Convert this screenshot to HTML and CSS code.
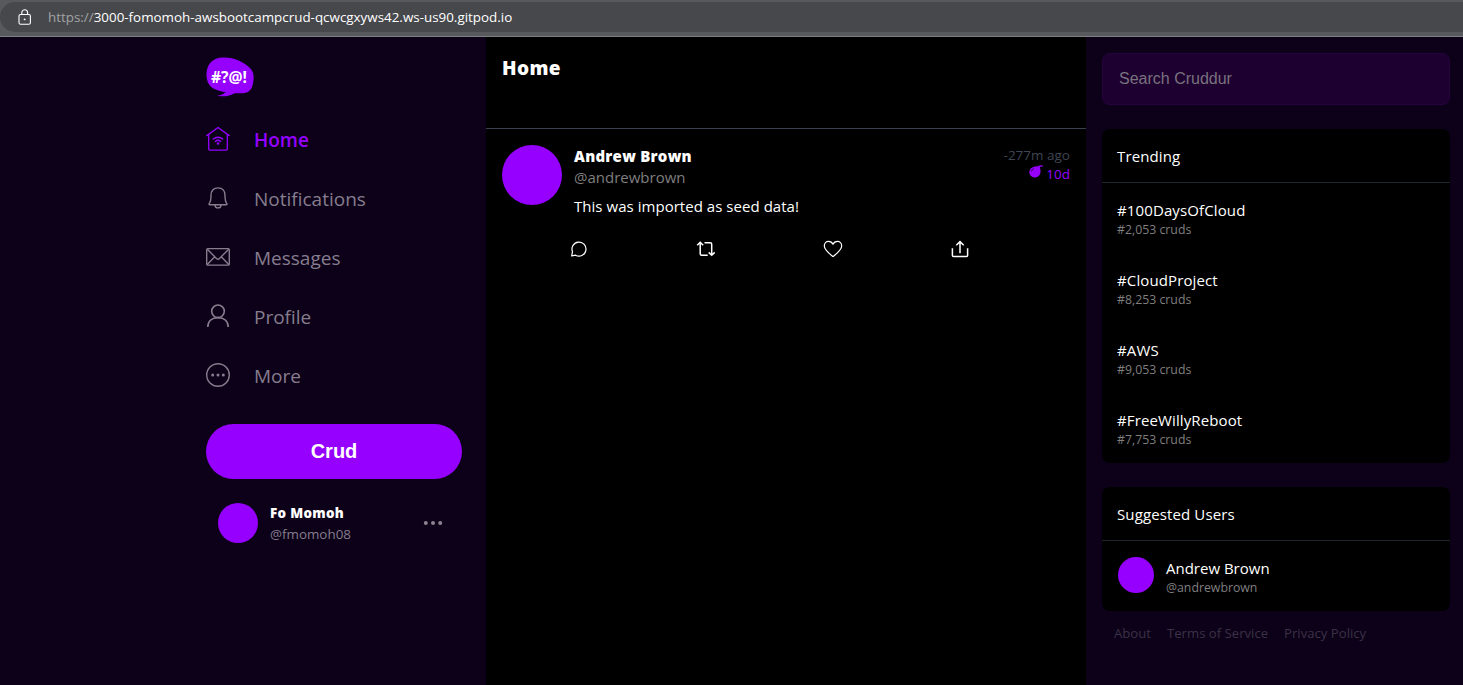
FILE: index.html
```html
<!DOCTYPE html>
<html lang="en">
<head>
<meta charset="utf-8">
<title>Cruddur</title>
<link rel="stylesheet" href="styles.css">
</head>
<body>
<header class="browser-bar">
  <div class="address">
    <svg class="lock" width="14" height="17" viewBox="0 0 14 17" fill="none" stroke="#fff" stroke-width="1.1"><rect x="1" y="5.5" width="11.4" height="9.8" rx="1.6"/><path d="M3.8 5.5V3.8a2.900 3 0 0 1 5.800 0v1.700"/><circle cx="6.700" cy="10.400" r=".6" fill="#fff" stroke-width=".7"/></svg>
    <span class="url"><span class="scheme">https://</span>3000-fomomoh-awsbootcampcrud-qcwcgxyws42.ws-us90.gitpod.io</span>
  </div>
</header>
<div class="app">
  <aside class="left">
    <nav class="nav">
      <svg class="logo" width="48" height="40" viewBox="0 0 48 40"><path fill="#9500ff" d="M17.500 0.400C27 0 38 4.500 44.500 11.500c3.800 4.500 3.500 9.500 2.500 14.500-.8 6-3.500 9.500-9.500 10.200-4 .4-8-.2-9.500.3-4 2.300-10 3.800-17 2.200 4-.6 7-1.800 8.800-3.800C12 34.500 5 31.500 2.200 26-1 19 .2 10 5 5 8.500 1.500 12.500.6 17.500.4z"/><text class="logo-text" x="5" y="25.500" textLength="36" lengthAdjust="spacingAndGlyphs">#?@!</text></svg>
      <a class="nav-item active"><svg width="24" height="26" viewBox="0 0 24 26" fill="none" stroke="currentColor" stroke-width="1.300" stroke-linejoin="round" stroke-linecap="round"><path d="M.8 9.600 12 1.500l11.200 8.100M2.700 8.500v14.300c0 .8.5 1.300 1.300 1.300h16c.8 0 1.300-.5 1.300-1.300V8.500M7.300 13.100c2.700-2.500 6.700-2.500 9.400 0M9.300 15.500c1.500-1.400 3.900-1.400 5.400 0"/><circle cx="12" cy="17.500" r=".7" fill="currentColor"/></svg><span>Home</span></a>
      <a class="nav-item"><svg width="24" height="26" viewBox="0 0 24 26" fill="none" stroke="currentColor" stroke-width="1.400" stroke-linejoin="round"><path d="M12 2.900c-4.600 0-7 3.200-7 7.300 0 4.800-.6 6.900-1.700 8.200-.7.8-.4 1.300.4 1.300h16.600c.8 0 1.100-.5.4-1.300-1.100-1.300-1.700-3.400-1.700-8.200 0-4.100-2.400-7.300-7-7.300zM9 19.900a3 3 0 0 0 6 0"/></svg><span>Notifications</span></a>
      <a class="nav-item"><svg width="24" height="26" viewBox="0 0 24 26" fill="none" stroke="currentColor" stroke-width="1.400" stroke-linejoin="round"><rect x=".7" y="4.600" width="22.600" height="16.500" rx="1.200"/><path d="m1.300 5.200 9.200 9.300q1.500 1.300 3 0l9.200-9.300M1.300 20.500l7.400-7.700M22.700 20.500l-7.400-7.700"/></svg><span>Messages</span></a>
      <a class="nav-item"><svg width="24" height="26" viewBox="0 0 24 26" fill="none" stroke="currentColor" stroke-width="1.600"><circle cx="12" cy="8.300" r="6.300"/><path d="M1.800 24C1.800 18 6 14.600 12 14.600S22.200 18 22.200 24"/></svg><span>Profile</span></a>
      <a class="nav-item"><svg width="24" height="26" viewBox="0 0 24 26" fill="none" stroke="currentColor" stroke-width="1.400"><circle cx="12" cy="13" r="11.300"/><g fill="currentColor" stroke="none"><circle cx="6.700" cy="13" r="1.500"/><circle cx="12" cy="13" r="1.500"/><circle cx="17.300" cy="13" r="1.500"/></g></svg><span>More</span></a>
      <button class="crud">Crud</button>
      <div class="me">
        <div class="avatar avatar-me"></div>
        <div class="me-text"><div class="me-name">Fo Momoh</div><div class="me-handle">@fmomoh08</div></div>
        <svg width="20" height="6" viewBox="0 0 20 6" fill="#8b8292"><circle cx="2.800" cy="3" r="2"/><circle cx="10" cy="3" r="2"/><circle cx="17.200" cy="3" r="2"/></svg>
      </div>
    </nav>
  </aside>
  <main class="feed">
    <div class="feed-head"><span class="feed-title">Home</span></div>
    <article class="post">
      <div class="post-top">
        <div class="avatar avatar-post"></div>
        <div class="post-body">
          <div class="post-name">Andrew Brown</div>
          <div class="post-handle">@andrewbrown</div>
          <div class="post-text">This was imported as seed data!</div>
        </div>
        <div class="post-time">
          <div class="ago">-277m ago</div>
          <div class="expires"><svg width="14" height="13" viewBox="0 0 14 13"><path fill="#9500ff" d="M4.500 1.900C6 .9 7.500 1 8.700 1.600L10.200.4l3.500-.1.200 1.100-2.400.4-.7 1 .5 1.200c1.200 4.600-1.400 8.500-5.300 8.500C2.700 12.500.3 9.900.3 7.200c0-2.600 1.500-4.500 4.200-5.300z"/><path d="M2.300 6.500Q2.800 4.300 4.800 3.600" fill="none" stroke="#25003f" stroke-width=".9"/></svg><span>10d</span></div>
        </div>
      </div>
      <div class="actions">
        <svg width="18" height="18" viewBox="0 0 18 18" fill="none" stroke="#fff" stroke-width="1.200" stroke-linejoin="round"><path d="M2.500 11.700A7 7 0 1 1 5.600 15.200L1.700 15.800z"/></svg>
        <svg width="20" height="18" viewBox="0 0 20 18" fill="none" stroke="#fff" stroke-width="1.500"><path d="M1.200 5.200 4.200 2.300l3 2.900M4.200 2.600v11.200q0 1.500 1.500 1.500h6M8.500 2.700h5.700q1.500 0 1.500 1.500v11M12.700 12.400l3 2.900 3-2.900"/></svg>
        <svg width="20" height="18" viewBox="0 0 20 18" fill="none" stroke="#fff" stroke-width="1.200" stroke-linejoin="round"><path d="M10 16.600C6.500 13.800 1.300 9.700 1.300 5.900c0-2.600 1.900-4.500 4.300-4.500 2 0 3.500 1.100 4.400 2.900.9-1.800 2.400-2.900 4.400-2.900 2.400 0 4.300 1.900 4.300 4.500 0 3.800-5.200 7.900-8.700 10.700z"/></svg>
        <svg width="18" height="18" viewBox="0 0 18 18" fill="none" stroke="#fff" stroke-width="1.500"><path d="M1.400 8.300v7.200q0 1 1 1h13.200q1 0 1-1V8.300M9 13.200V2M5.300 5.200 9 1.600l3.700 3.600"/></svg>
      </div>
    </article>
  </main>
  <aside class="right">
    <input class="search" type="text" placeholder="Search Cruddur">
    <section class="card">
      <div class="card-title">Trending</div>
      <div class="trends">
        <div class="trend"><div class="tag">#100DaysOfCloud</div><div class="count">#2,053 cruds</div></div>
        <div class="trend"><div class="tag">#CloudProject</div><div class="count">#8,253 cruds</div></div>
        <div class="trend"><div class="tag">#AWS</div><div class="count">#9,053 cruds</div></div>
        <div class="trend"><div class="tag">#FreeWillyReboot</div><div class="count">#7,753 cruds</div></div>
      </div>
    </section>
    <section class="card">
      <div class="card-title">Suggested Users</div>
      <div class="suggested">
        <div class="avatar avatar-suggested"></div>
        <div class="user"><div class="user-name">Andrew Brown</div><div class="count">@andrewbrown</div></div>
      </div>
    </section>
    <footer class="links"><a>About</a><a>Terms of Service</a><a>Privacy Policy</a></footer>
  </aside>
</div>
</body>
</html>
```
FILE: styles.css
```css
* { box-sizing: border-box; }
body {
  margin: 0;
  height: 685px;
  overflow: hidden;
  background: #000;
  color: #fff;
  font-family: "Open Sans", "Noto Sans", sans-serif;
  font-size: 15px;
}
svg { display: block; flex: none; }
.browser-bar {
  height: 37px;
  padding: 2px 0 4px;
  background: #58595d;
  border-bottom: 1px solid #7f8084;
}
.address {
  display: flex;
  align-items: center;
  height: 30px;
  padding-left: 18px;
  gap: 16px;
  border-radius: 15px 0 0 15px;
  background: #47484c;
}
.url { font-size: 13.4px; line-height: 18px; white-space: nowrap; }
.scheme { color: #a2a3a5; }
.app { display: flex; height: 648px; }
.left { width: 486px; padding: 20px 24px 0 206px; background: #0c0119; }
.nav { display: flex; flex-direction: column; }
.logo { margin-bottom: 14px; }
.logo-text { font-family: "Noto Sans", sans-serif; font-weight: 700; font-size: 16px; fill: #fff; }
.nav-item {
  display: flex;
  align-items: center;
  gap: 24px;
  height: 59px;
  padding-bottom: 2px;
  color: #867d8d;
  font-size: 19px;
}
.nav-item svg { margin-bottom: 2px; }
.nav-item.active { color: #9500ff; font-weight: 600; }
.crud {
  height: 55px;
  margin-top: 18px;
  border: 0;
  border-radius: 28px;
  background: #9500ff;
  color: #fff;
  font: 700 20px "Liberation Sans", sans-serif;
}
.avatar { flex: none; border-radius: 50%; background: #9500ff; }
.me { display: flex; align-items: center; height: 64px; padding: 24px 19px 0 12px; }
.avatar-me { width: 40px; height: 40px; }
.me-text { flex: 1; padding: 2px 0 0 12px; line-height: 21px; }
.me-name { font-size: 13.4px; font-weight: 800; letter-spacing: .3px; }
.me-handle { color: #867d8d; font-size: 13.4px; }
.feed { width: 600px; background: #000; }
.feed-head { height: 92px; padding: 18px 16px; border-bottom: 1px solid #394150; }
.feed-title { font-size: 19px; line-height: 27px; font-weight: 800; letter-spacing: .4px; }
.post { padding: 16px; }
.post-top { display: flex; }
.avatar-post { width: 60px; height: 60px; }
.post-body { flex: 1; padding-left: 12px; }
.post-name { font-weight: 800; line-height: 22px; letter-spacing: .25px; }
.post-handle { color: #7f7f7f; line-height: 21px; }
.post-text { padding-top: 7px; line-height: 22px; letter-spacing: .04px; }
.post-time { display: flex; flex-direction: column; align-items: flex-end; font-size: 13.5px; }
.ago { color: #3f4653; line-height: 20px; }
.expires { display: flex; gap: 3px; color: #9500ff; line-height: 18px; }
.actions { display: flex; justify-content: space-between; padding: 23px 101px 0 68px; }
.right { width: 377px; padding: 16px 13px 0 16px; background: #0c0119; }
.search {
  display: block;
  width: 100%;
  height: 52px;
  padding: 0 16px;
  border: 1px solid #26033f;
  border-radius: 8px;
  background: #1e0030;
  font: 16px "Liberation Sans", sans-serif;
}
.search::placeholder { color: #79727f; opacity: 1; }
.card { margin-top: 24px; border-radius: 8px; background: #000; }
.card-title { height: 54px; padding: 0 15px; border-bottom: 1px solid #1f2430; line-height: 54px; letter-spacing: .12px; }
.trends { display: flex; flex-direction: column; }
.trend { height: 70px; padding: 17px 15px 0; }
.tag { line-height: 21px; letter-spacing: .12px; }
.count { color: #7f7f7f; font-size: 12.3px; line-height: 18px; }
.suggested { display: flex; gap: 12px; height: 70px; padding: 16px; }
.user { padding-top: 1px; }
.user-name { line-height: 21px; }
.avatar-suggested { width: 36px; height: 36px; }
.links { display: flex; gap: 16px; padding: 12px; color: #3b3145; font-size: 13.15px; line-height: 20px; }
```
